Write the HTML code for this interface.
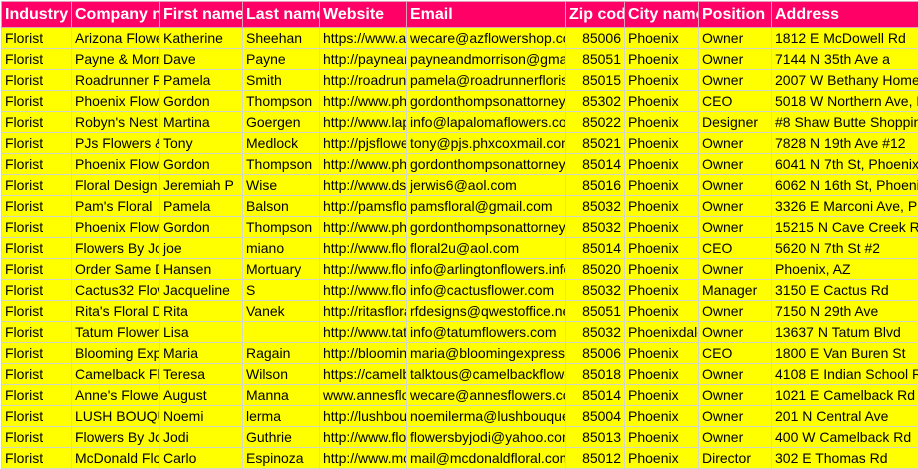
<!DOCTYPE html>
<html><head><style>
html,body{margin:0;padding:0;background:#fff;width:918px;height:468px;overflow:hidden}
table{border-collapse:collapse;table-layout:fixed;position:absolute;left:1px;top:1px;width:917px}
td{height:20px;padding:0 0 0 3px;border:1px solid #d6d6c8;background:#ffff00;color:#000;font:14px "Liberation Sans",Arial,sans-serif;white-space:nowrap;overflow:hidden;text-overflow:clip;line-height:20px;max-width:0}
tr.h td{height:25px;background:#ff0066;color:#fff;font-weight:bold;font-size:16px;border-color:#e0a0b8;line-height:25px}
td.r{text-align:right;padding:0 3px 0 0}
</style></head><body>
<table>
<colgroup><col style="width:70px"><col style="width:88px"><col style="width:83px"><col style="width:77px"><col style="width:87px"><col style="width:159px"><col style="width:59px"><col style="width:74px"><col style="width:73px"><col style="width:147px"></colgroup>
<tr class="h"><td>Industry</td><td>Company name</td><td>First name</td><td>Last name</td><td>Website</td><td>Email</td><td>Zip code</td><td>City name</td><td>Position</td><td>Address</td></tr>
<tr><td>Florist</td><td>Arizona Flowers</td><td>Katherine</td><td>Sheehan</td><td>https://www.az</td><td>wecare@azflowershop.com</td><td class="r">85006</td><td>Phoenix</td><td>Owner</td><td>1812 E McDowell Rd</td></tr>
<tr><td>Florist</td><td>Payne &amp; Morrison</td><td>Dave</td><td>Payne</td><td>http://payneand</td><td>payneandmorrison@gmail.com</td><td class="r">85051</td><td>Phoenix</td><td>Owner</td><td>7144 N 35th Ave a</td></tr>
<tr><td>Florist</td><td>Roadrunner Florist</td><td>Pamela</td><td>Smith</td><td>http://roadrunner</td><td>pamela@roadrunnerflorist.com</td><td class="r">85015</td><td>Phoenix</td><td>Owner</td><td>2007 W Bethany Home</td></tr>
<tr><td>Florist</td><td>Phoenix Flowers</td><td>Gordon</td><td>Thompson</td><td>http://www.pho</td><td>gordonthompsonattorney</td><td class="r">85302</td><td>Phoenix</td><td>CEO</td><td>5018 W Northern Ave, P</td></tr>
<tr><td>Florist</td><td>Robyn's Nest</td><td>Martina</td><td>Goergen</td><td>http://www.lapa</td><td>info@lapalomaflowers.com</td><td class="r">85022</td><td>Phoenix</td><td>Designer</td><td>#8 Shaw Butte Shopping</td></tr>
<tr><td>Florist</td><td>PJs Flowers &amp; Gifts</td><td>Tony</td><td>Medlock</td><td>http://pjsflowers</td><td>tony@pjs.phxcoxmail.com</td><td class="r">85021</td><td>Phoenix</td><td>Owner</td><td>7828 N 19th Ave #12</td></tr>
<tr><td>Florist</td><td>Phoenix Flowers</td><td>Gordon</td><td>Thompson</td><td>http://www.pho</td><td>gordonthompsonattorney</td><td class="r">85014</td><td>Phoenix</td><td>Owner</td><td>6041 N 7th St, Phoenix</td></tr>
<tr><td>Florist</td><td>Floral Design</td><td>Jeremiah P</td><td>Wise</td><td>http://www.dsgn</td><td>jerwis6@aol.com</td><td class="r">85016</td><td>Phoenix</td><td>Owner</td><td>6062 N 16th St, Phoenix</td></tr>
<tr><td>Florist</td><td>Pam's Floral</td><td>Pamela</td><td>Balson</td><td>http://pamsfloral</td><td>pamsfloral@gmail.com</td><td class="r">85032</td><td>Phoenix</td><td>Owner</td><td>3326 E Marconi Ave, Ph</td></tr>
<tr><td>Florist</td><td>Phoenix Flowers</td><td>Gordon</td><td>Thompson</td><td>http://www.pho</td><td>gordonthompsonattorney</td><td class="r">85032</td><td>Phoenix</td><td>Owner</td><td>15215 N Cave Creek Rd</td></tr>
<tr><td>Florist</td><td>Flowers By Jodi</td><td>joe</td><td>miano</td><td>http://www.flow</td><td>floral2u@aol.com</td><td class="r">85014</td><td>Phoenix</td><td>CEO</td><td>5620 N 7th St #2</td></tr>
<tr><td>Florist</td><td>Order Same Day</td><td>Hansen</td><td>Mortuary</td><td>http://www.flow</td><td>info@arlingtonflowers.info</td><td class="r">85020</td><td>Phoenix</td><td>Owner</td><td>Phoenix, AZ</td></tr>
<tr><td>Florist</td><td>Cactus32 Flowers</td><td>Jacqueline</td><td>S</td><td>http://www.flow</td><td>info@cactusflower.com</td><td class="r">85032</td><td>Phoenix</td><td>Manager</td><td>3150 E Cactus Rd</td></tr>
<tr><td>Florist</td><td>Rita's Floral Design</td><td>Rita</td><td>Vanek</td><td>http://ritasflora</td><td>rfdesigns@qwestoffice.net</td><td class="r">85051</td><td>Phoenix</td><td>Owner</td><td>7150 N 29th Ave</td></tr>
<tr><td>Florist</td><td>Tatum Flowers</td><td>Lisa</td><td></td><td>http://www.tatu</td><td>info@tatumflowers.com</td><td class="r">85032</td><td>Phoenixdale</td><td>Owner</td><td>13637 N Tatum Blvd</td></tr>
<tr><td>Florist</td><td>Blooming Express</td><td>Maria</td><td>Ragain</td><td>http://blooming</td><td>maria@bloomingexpress.com</td><td class="r">85006</td><td>Phoenix</td><td>CEO</td><td>1800 E Van Buren St</td></tr>
<tr><td>Florist</td><td>Camelback Flowers</td><td>Teresa</td><td>Wilson</td><td>https://camelba</td><td>talktous@camelbackflowers</td><td class="r">85018</td><td>Phoenix</td><td>Owner</td><td>4108 E Indian School Rd</td></tr>
<tr><td>Florist</td><td>Anne's Flowers</td><td>August</td><td>Manna</td><td>www.annesflow</td><td>wecare@annesflowers.com</td><td class="r">85014</td><td>Phoenix</td><td>Owner</td><td>1021 E Camelback Rd</td></tr>
<tr><td>Florist</td><td>LUSH BOUQUET</td><td>Noemi</td><td>lerma</td><td>http://lushbouq</td><td>noemilerma@lushbouquet</td><td class="r">85004</td><td>Phoenix</td><td>Owner</td><td>201 N Central Ave</td></tr>
<tr><td>Florist</td><td>Flowers By Jodi</td><td>Jodi</td><td>Guthrie</td><td>http://www.flow</td><td>flowersbyjodi@yahoo.com</td><td class="r">85013</td><td>Phoenix</td><td>Owner</td><td>400 W Camelback Rd</td></tr>
<tr><td>Florist</td><td>McDonald Floral</td><td>Carlo</td><td>Espinoza</td><td>http://www.mcd</td><td>mail@mcdonaldfloral.com</td><td class="r">85012</td><td>Phoenix</td><td>Director</td><td>302 E Thomas Rd</td></tr>
</table>
</body></html>
